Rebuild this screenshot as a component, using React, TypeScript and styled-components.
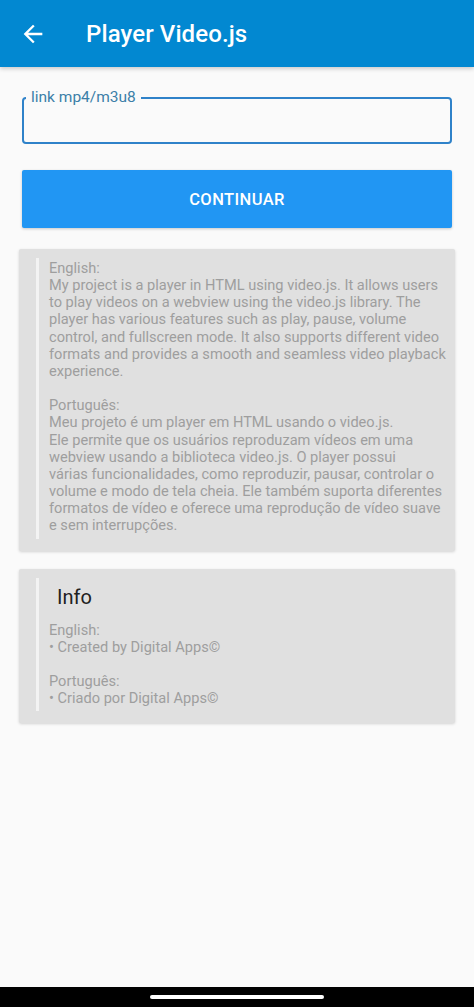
import styled, { createGlobalStyle } from 'styled-components';

const GlobalStyle = createGlobalStyle`
    html, body {
        margin: 0;
        padding: 0;
        background: #fafafa;
    }

    body {
        font-family: Roboto, 'Noto Sans', 'Liberation Sans', sans-serif;
    }
`;

const Screen = styled.div`
    display: flex;
    flex-direction: column;
    min-height: 100vh;
    background: #fafafa;
`;

const AppBar = styled.header`
    display: flex;
    align-items: center;
    height: 67px;
    flex-shrink: 0;
    background: #0288d1;
    box-shadow: 0 2px 4px rgba(0, 0, 0, 0.18);
    color: #fff;
`;

const BackButton = styled.button`
    display: flex;
    align-items: center;
    justify-content: center;
    margin-left: 19px;
    padding: 0;
    border: 0;
    background: transparent;
    color: inherit;
`;

const Title = styled.h1`
    margin: 0 0 0 39px;
    font-size: 24px;
    font-weight: 500;
    letter-spacing: 0.1px;
`;

const Content = styled.main`
    flex: 1;
    display: flex;
    flex-direction: column;
    padding: 0 19px;
`;

const Field = styled.fieldset`
    margin: 22px 3px 0;
    padding: 0 0 0 2px;
    border: 2px solid #2f82c9;
    border-radius: 4px;
`;

const FieldLabel = styled.legend`
    padding: 0 5px;
    font-size: 15.5px;
    line-height: 17px;
    color: #3c7fa8;
`;

const UrlInput = styled.input`
    display: block;
    width: 100%;
    height: 36px;
    padding: 0 10px;
    border: 0;
    outline: none;
    background: transparent;
    box-sizing: border-box;
    font-family: inherit;
    font-size: 15px;
`;

const PrimaryButton = styled.button`
    margin: 26px 3px 0;
    height: 58px;
    border: 0;
    border-radius: 2px;
    background: #2196f3;
    box-shadow: 0 1px 3px rgba(0, 0, 0, 0.2);
    color: #fff;
    font-family: inherit;
    font-size: 16.5px;
    font-weight: 500;
    letter-spacing: 0.4px;
`;

const Card = styled.section<{ spacing: number }>`
    margin-top: ${props => props.spacing}px;
    padding: 9px 8px 12px 17px;
    border-radius: 2px;
    background: #e0e0e0;
    box-shadow: 0 1px 3px rgba(0, 0, 0, 0.16);
`;

const Quote = styled.blockquote<{ top: number }>`
    margin: 0;
    padding: ${props => props.top}px 0 4px 10px;
    border-left: 3px solid #f3f3f3;
`;

const CardHeading = styled.h2`
    margin: 0 0 13px 8px;
    font-size: 20px;
    font-weight: 400;
    line-height: 24px;
    color: #212121;
`;

const Body = styled.p`
    margin: 0;
    font-size: 14.6px;
    line-height: 17.15px;
    color: #9e9e9e;
    white-space: pre-line;
`;

const NavBar = styled.div`
    display: flex;
    justify-content: center;
    align-items: center;
    height: 20px;
    flex-shrink: 0;
    background: #000;
`;

const GesturePill = styled.span`
    width: 174px;
    height: 4px;
    border-radius: 2px;
    background: #fff;
`;

const aboutText = `English:
My project is a player in HTML using video.js. It allows users to play videos on a webview using the video.js library. The player has various features such as play, pause, volume control, and fullscreen mode. It also supports different video formats and provides a smooth and seamless video playback experience.

Português:
Meu projeto é um player em HTML usando o video.js.
Ele permite que os usuários reproduzam vídeos em uma webview usando a biblioteca video.js. O player possui
várias funcionalidades, como reproduzir, pausar, controlar o volume e modo de tela cheia. Ele também suporta diferentes formatos de vídeo e oferece uma reprodução de vídeo suave e sem interrupções.`;

const infoText = `English:
• Created by Digital Apps©

Português:
• Criado por Digital Apps©`;

function ArrowBack() {
    return (
        <svg width="28" height="28" viewBox="0 0 24 24" fill="currentColor" aria-hidden="true">
            <path d="M20 11H7.83l5.59-5.59L12 4l-8 8 8 8 1.41-1.41L7.83 13H20v-2z" />
        </svg>
    );
}

function App(): JSX.Element {
    return (
        <Screen>
            <GlobalStyle />
            <AppBar>
                <BackButton type="button" aria-label="Voltar">
                    <ArrowBack />
                </BackButton>
                <Title>Player Video.js</Title>
            </AppBar>
            <Content>
                <Field>
                    <FieldLabel>link mp4/m3u8</FieldLabel>
                    <UrlInput type="url" />
                </Field>
                <PrimaryButton type="button">CONTINUAR</PrimaryButton>
                <Card spacing={21}>
                    <Quote top={2}>
                        <Body>{aboutText}</Body>
                    </Quote>
                </Card>
                <Card spacing={18}>
                    <Quote top={7}>
                        <CardHeading>Info</CardHeading>
                        <Body>{infoText}</Body>
                    </Quote>
                </Card>
            </Content>
            <NavBar>
                <GesturePill />
            </NavBar>
        </Screen>
    );
}

export default App;
